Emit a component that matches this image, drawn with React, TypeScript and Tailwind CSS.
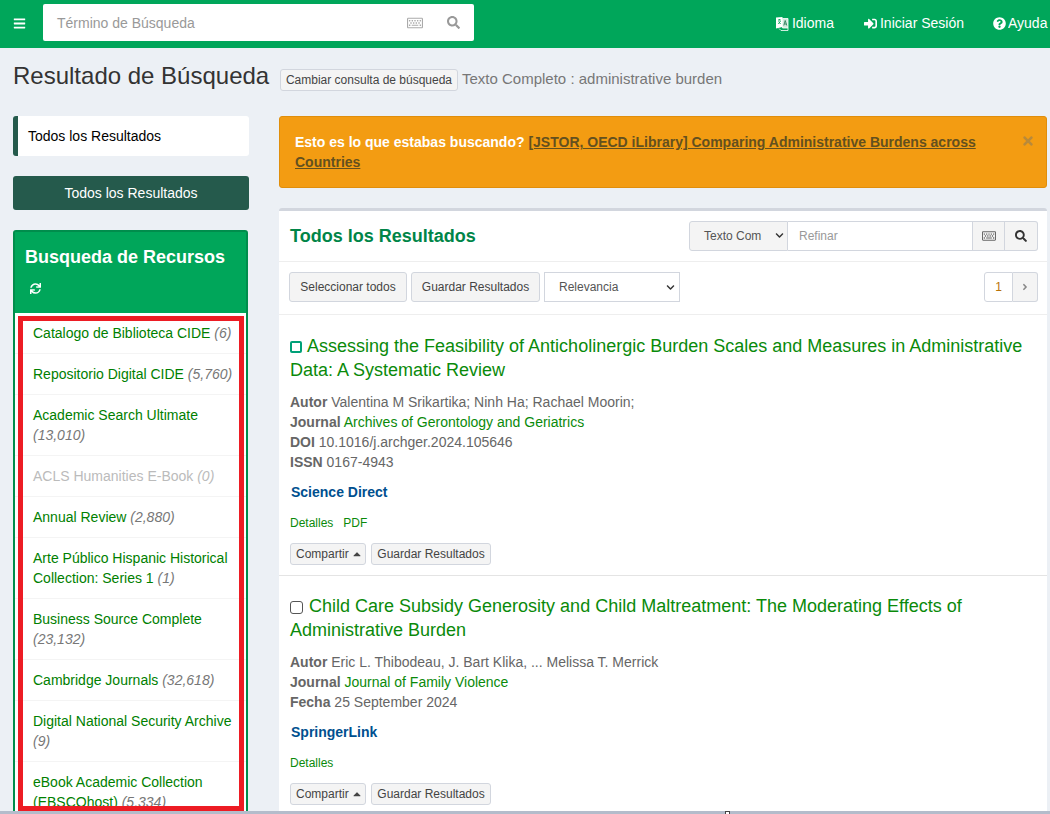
import React from "react";
import { FaBars, FaRegKeyboard, FaSearch, FaSignInAlt, FaQuestionCircle, FaSync, FaTimes, FaAngleRight, FaChevronDown, FaCaretUp } from "react-icons/fa";

const sources: [string, string, boolean?][] = [
  ["Catalogo de Biblioteca CIDE", "(6)"],
  ["Repositorio Digital CIDE", "(5,760)"],
  ["Academic Search Ultimate", "(13,010)"],
  ["ACLS Humanities E-Book", "(0)", true],
  ["Annual Review", "(2,880)"],
  ["Arte Público Hispanic Historical Collection: Series 1", "(1)"],
  ["Business Source Complete", "(23,132)"],
  ["Cambridge Journals", "(32,618)"],
  ["Digital National Security Archive", "(9)"],
  ["eBook Academic Collection (EBSCOhost)", "(5,334)"],
];

function Btn({ children, cls = "" }: { children: React.ReactNode; cls?: string }) {
  return (
    <span className={"inline-flex items-center justify-center bg-[#f4f4f4] border border-[#d2d6de] rounded-[3px] text-[#444] text-xs " + cls}>
      {children}
    </span>
  );
}

function Row({ label, children }: { label: string; children: React.ReactNode }) {
  return (
    <div className="h-5 leading-5 text-[14px] text-[#666]">
      <b className="font-bold">{label}</b> {children}
    </div>
  );
}

function Actions() {
  return (
    <div className="flex gap-[5px] mt-[10px]">
      <Btn cls="w-[76px] h-[22px] gap-[2px] !justify-start pl-[5px]">
        Compartir <FaCaretUp className="text-[12px]" />
      </Btn>
      <Btn cls="w-[120px] h-[22px]">Guardar Resultados</Btn>
    </div>
  );
}

function LangIcon() {
  return (
    <svg width="14" height="15" viewBox="0 0 14 15" className="mr-[3px]">
      <path d="M1 1.5 L7.5 1 V11 L1 12.5 Z" fill="#fff" />
      <path d="M7.5 2.5 H13 V12 H7.5 Z" fill="#cfe9dc" stroke="#fff" strokeWidth="0.8" />
      <path d="M3 4 H5.8 M4.4 3 V4 M3.3 8 L5.6 5 M3.6 5.4 L5.6 8" stroke="#00a65a" strokeWidth="0.9" fill="none" />
      <path d="M8.8 9.5 L10.2 4.5 L11.8 9.5 M9.4 8 H11.2" stroke="#2f7f5c" strokeWidth="0.9" fill="none" />
      <path d="M4 12.5 L6 14.5 H13 V12" fill="none" stroke="#fff" strokeWidth="0.8" />
    </svg>
  );
}

export default function App() {
  return (
    <div className="h-[814px] w-[1050px] overflow-hidden relative bg-[#ecf0f5] font-['Liberation_Sans',Arial,sans-serif] text-[14px] text-[#333]">
      <header className="h-12 bg-[#00a65a] flex items-start pt-1 text-white">
        <div className="w-[43px] h-[37px] pl-[13px] pt-[1px] flex items-center">
          <FaBars className="text-[13px]" />
        </div>
        <div className="w-[431px] h-[37px] bg-white rounded-[2px] flex items-center text-[#999] pl-[14px]">
          <span className="text-[14px] flex-1 pt-[1px]">Término de Búsqueda</span>
          <FaRegKeyboard className="text-[16px] text-[#aaa] mr-[24px]" />
          <FaSearch className="text-[13px] text-[#999] mr-[14px]" />
        </div>
        <div className="ml-auto h-[37px] pt-[1px] flex items-center whitespace-nowrap">
          <LangIcon />
          <span>Idioma</span>
          <FaSignInAlt className="text-[13px] ml-[30px] mr-[3px]" />
          <span>Iniciar Sesión</span>
          <FaQuestionCircle className="text-[13px] ml-[29px] mr-[2px]" />
          <span className="w-[42px] overflow-hidden">Ayuda</span>
        </div>
      </header>

      <div className="flex items-center h-[60px] pl-[13px] pt-[1px]">
        <h1 className="text-2xl font-normal text-[#333] w-[267px] mb-[6px]">Resultado de Búsqueda</h1>
        <Btn cls="w-[178px] h-[22px] mt-[3px]">Cambiar consulta de búsqueda</Btn>
        <span className="ml-[4px] mt-[1px] text-[15px] text-[#777]">Texto Completo : administrative burden</span>
      </div>

      <div className="flex pl-[13px] pt-2">
        <aside className="w-[236px] shrink-0">
          <div className="h-10 bg-white rounded-[3px] border-l-[5px] border-[#255a4c] flex items-center pl-[10px] text-black">
            Todos los Resultados
          </div>
          <div className="h-[34px] mt-5 bg-[#255a4c] rounded-[3px] text-white flex items-center justify-center">
            Todos los Resultados
          </div>
          <div className="mt-5 w-[235px] relative border-2 border-[#008d4c] rounded-[3px] bg-white h-[600px]">
            <div className="bg-[#00a65a] h-[81px] text-white px-[10px] pt-[13px]">
              <div className="text-lg font-bold leading-6">Busqueda de Recursos</div>
              <FaSync className="text-[11px] mt-[14px] ml-[5px]" />
            </div>
            <ul>
              {sources.map(([name, n, off]) => (
                <li key={name} className="border-b border-[#f4f4f4] py-[10px] pl-[18px] pr-[10px] leading-5">
                  <span className={off ? "text-[#bbb]" : "text-[#008000]"}>{name}</span>{" "}
                  <i className={off ? "text-[#bbb]" : "text-[#777]"}>{n}</i>
                </li>
              ))}
            </ul>
            <div className="absolute left-[3px] top-[84px] w-[226px] h-[495px] border-[5px] border-[#ed1c24]" />
          </div>
        </aside>

        <main className="ml-[30px] w-[768px] shrink-0">
          <div className="h-[72px] bg-[#f39c12] rounded-[3px] border border-[#e08e0b] relative pl-[15px] pr-[50px] pt-[15px] leading-[20px] font-bold text-white">
            Esto es lo que estabas buscando? <span className="text-[#63501f] underline">[JSTOR, OECD iLibrary] Comparing Administrative Burdens across Countries</span>
            <FaTimes className="absolute right-[11px] top-[17px] text-[14px] text-[#b98a3a]" />
          </div>

          <section className="mt-5 bg-white border-t-[3px] border-[#d2d6de] rounded-[3px] h-[700px]">
            <div className="h-[51px] pb-[1px] flex items-center pl-[11px] pr-[9px] border-b border-[#eee]">
              <h2 className="text-lg font-bold text-[#008548]">Todos los Resultados</h2>
              <div className="ml-auto flex h-[30px] text-xs text-[#555]">
                <span className="w-[99px] border border-[#d2d6de] rounded-l-[3px] bg-[#f4f4f4] flex items-center pl-[14px] whitespace-nowrap">
                  Texto Com
                  <FaChevronDown className="text-[9px] ml-auto mr-[3px] text-[#333]" />
                </span>
                <span className="w-[184px] border-y border-[#d2d6de] flex items-center pl-[11px] text-[#999]">Refinar</span>
                <span className="w-[33px] border border-[#d2d6de] bg-[#f4f4f4] flex items-center justify-center">
                  <FaRegKeyboard className="text-[14px] text-[#666]" />
                </span>
                <span className="w-[33px] border border-l-0 border-[#d2d6de] rounded-r-[3px] bg-[#f4f4f4] flex items-center justify-center">
                  <FaSearch className="text-[12px] text-[#333]" />
                </span>
              </div>
            </div>

            <div className="h-[53px] pb-[2px] flex items-center pl-[10px] pr-[9px] border-b border-[#eee]">
              <Btn cls="w-[118px] h-[30px] mr-1">Seleccionar todos</Btn>
              <Btn cls="w-[129px] h-[30px] mr-1">Guardar Resultados</Btn>
              <span className="w-[136px] h-[30px] border border-[#d2d6de] flex items-center pl-[14px] pr-[3px] text-xs text-[#555]">
                Relevancia
                <FaChevronDown className="text-[9px] ml-auto mr-[1px] text-[#333]" />
              </span>
              <div className="ml-auto flex h-[30px] text-xs">
                <span className="w-[29px] border border-[#d2d6de] rounded-l-[3px] flex items-center justify-center text-[#b8720a]">1</span>
                <span className="w-[25px] border border-l-0 border-[#d2d6de] rounded-r-[3px] bg-[#f4f4f4] flex items-center justify-center text-[#888]">
                  <FaAngleRight className="text-[10px]" />
                </span>
              </div>
            </div>

            <article className="h-[261px] border-b border-[#e4e4e4] pl-[11px] pr-[15px] pt-[19px]">
              <div className="text-lg leading-6 text-[#0a8a0a]">
                <span className="inline-block align-[-1px] w-[12px] h-[12px] border-2 border-[#00a078] rounded-[2px] mr-[5px]" />
                Assessing the Feasibility of Anticholinergic Burden Scales and Measures in Administrative Data: A Systematic Review
              </div>
              <div className="mt-[10px]">
                <Row label="Autor">Valentina M Srikartika; Ninh Ha; Rachael Moorin;</Row>
                <Row label="Journal"><span className="text-[#0a8a0a]">Archives of Gerontology and Geriatrics</span></Row>
                <Row label="DOI">10.1016/j.archger.2024.105646</Row>
                <Row label="ISSN">0167-4943</Row>
              </div>
              <div className="mt-[10px] h-5 leading-5 pl-[1px] font-bold text-[#00508f]">Science Direct</div>
              <div className="mt-[11px] h-5 leading-5 text-xs text-[#0a8a0a] flex gap-[10px]">
                <span>Detalles</span>
                <span>PDF</span>
              </div>
              <Actions />
            </article>

            <article className="pl-[11px] pr-[15px] pt-[18px]">
              <div className="text-lg leading-6 text-[#0a8a0a]">
                <span className="inline-block align-[-2px] w-[13px] h-[13px] border border-[#555] rounded-[3px] mr-[6px]" />
                Child Care Subsidy Generosity and Child Maltreatment: The Moderating Effects of Administrative Burden
              </div>
              <div className="mt-[10px]">
                <Row label="Autor">Eric L. Thibodeau, J. Bart Klika, ... Melissa T. Merrick</Row>
                <Row label="Journal"><span className="text-[#0a8a0a]">Journal of Family Violence</span></Row>
                <Row label="Fecha">25 September 2024</Row>
              </div>
              <div className="mt-[10px] h-5 leading-5 pl-[1px] font-bold text-[#00508f]">SpringerLink</div>
              <div className="mt-[11px] h-5 leading-5 text-xs text-[#0a8a0a]">Detalles</div>
              <Actions />
            </article>
          </section>
        </main>
      </div>

      <div className="absolute left-0 right-0 bottom-0 h-[3px] bg-[#b4bccb]" />
      <div className="absolute left-[725px] bottom-0 w-[5px] h-[3px] bg-white border-x border-t border-[#444]" />
    </div>
  );
}
